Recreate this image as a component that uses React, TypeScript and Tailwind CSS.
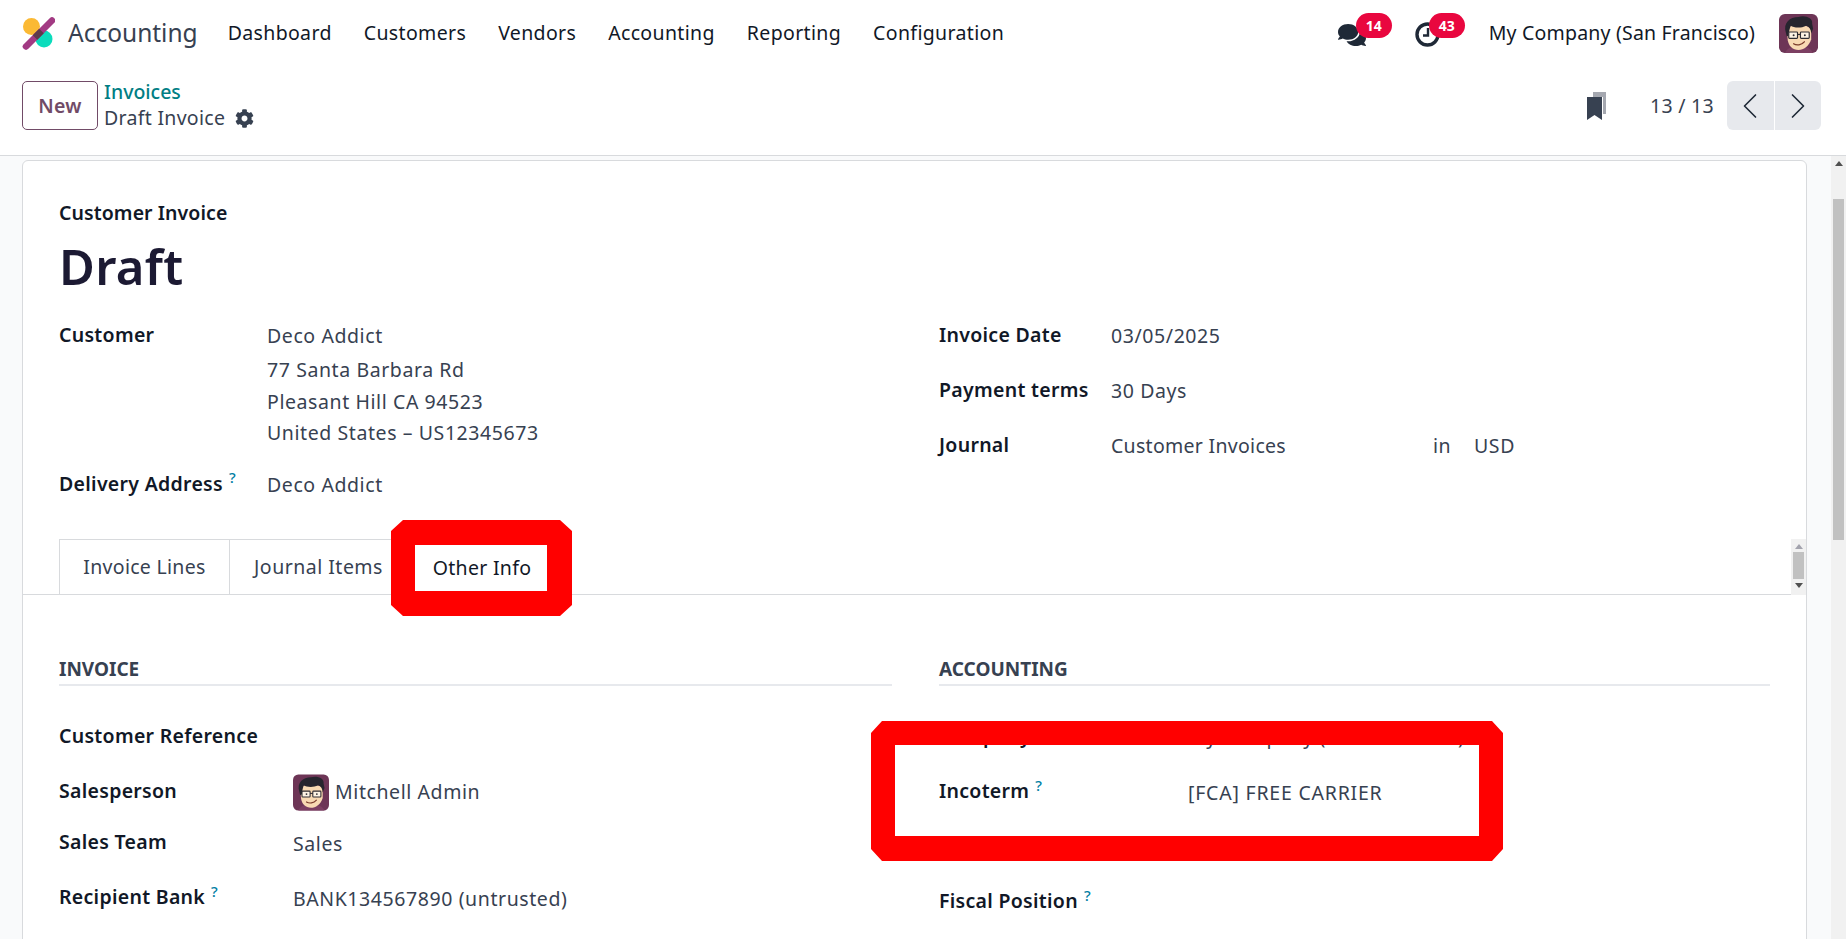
import type { ReactNode } from "react";
import { FaCog, FaComments } from "react-icons/fa";
import { ChevronLeft, ChevronRight } from "lucide-react";

const navItems = ["Dashboard", "Customers", "Vendors", "Accounting", "Reporting", "Configuration"];

function Logo() {
  return (
    <svg width="34" height="34" viewBox="0 0 34 34" className="shrink-0">
      <circle cx="10.5" cy="10.5" r="8.5" fill="#fbb934" />
      <circle cx="23" cy="23" r="8.5" fill="#0bdcbc" />
      <path d="M31 4.5 L5 30.5" stroke="#a23a83" strokeWidth="6.5" strokeLinecap="round" />
      <path d="M20.5 15 L14 21.5" stroke="#5e3a4c" strokeWidth="6.5" />
    </svg>
  );
}

function Avatar({ className }: { className: string }) {
  return (
    <svg viewBox="0 0 40 40" className={className}>
      <rect width="40" height="40" rx="6" fill="#6d3556" />
      <path d="M6 40 C8 35 13 33 20 33 C27 33 33 35 35 40 Z" fill="#7c3f62" />
      <path d="M8 16 C8 10 32 10 33 16 L33 26 C31 33 25 37 20 37 C14 37 10 33 9 27 Z" fill="#f8d9b3" />
      <path d="M7 19 C4 9 11 3 20 3 C27 1 35 4 34 10 L35 15 L33 20 C33 16 31 13 28 12 C22 15 15 14 12 12 C11 15 10 18 10 22 L8 23 Z" fill="#26252e" />
      <rect x="10" y="18.5" width="9" height="6.5" rx="0.8" fill="#fdf3e4" stroke="#2f2d33" strokeWidth="1.2" />
      <rect x="22" y="18.5" width="9" height="6.5" rx="0.8" fill="#fdf3e4" stroke="#2f2d33" strokeWidth="1.2" />
      <path d="M19 21 L22 21" stroke="#2f2d33" strokeWidth="1.2" />
      <circle cx="15" cy="21.8" r="1" fill="#2f2d33" />
      <circle cx="26.5" cy="21.8" r="1" fill="#2f2d33" />
      <path d="M15 30.5 C18 32.5 23 32 26 28.5" stroke="#7a3b2a" strokeWidth="1.3" fill="none" strokeLinecap="round" />
    </svg>
  );
}

function Badge({ left, children }: { left: string; children: ReactNode }) {
  return (
    <span className={`absolute top-[-6px] flex h-[25px] w-[36px] items-center justify-center rounded-full bg-[#e9073f] text-[14px] font-bold tracking-normal text-white ${left}`}>
      {children}
    </span>
  );
}

function Help() {
  return <sup className="ml-[6px] text-[15px] font-medium text-[#0180a5]">?</sup>;
}

function Row({
  label,
  help,
  labelWidth,
  className,
  children,
}: {
  label: string;
  help?: boolean;
  labelWidth: string;
  className?: string;
  children?: ReactNode;
}) {
  return (
    <div className={`flex h-[26px] items-center ${className ?? ""}`}>
      <div className={`shrink-0 font-semibold text-[#111827] ${labelWidth}`}>
        {label}
        {help && <Help />}
      </div>
      <div className="translate-y-[1px] whitespace-nowrap tracking-[0.03em]">{children}</div>
    </div>
  );
}

function SectionTitle({ children }: { children: ReactNode }) {
  return (
    <h3 className="mt-[60px] h-[31px] border-b-2 border-[#e7e9ed] text-[19px] leading-[28px] font-bold tracking-normal text-[#374151]">
      {children}
    </h3>
  );
}

export default function App() {
  return (
    <div className="relative flex h-[939px] flex-col overflow-hidden bg-white font-['Noto_Sans',sans-serif] text-[19.5px] tracking-[0.015em] text-[#374151]">
      {/* top nav */}
      <header className="flex h-[62px] shrink-0 items-center pl-[21px] pr-[28px] pt-[4px] text-[#111827]">
        <Logo />
        <span className="ml-[13px] text-[24.5px] tracking-normal text-[#374151]">Accounting</span>
        <nav className="ml-[30px] flex gap-[32px] tracking-[0.018em]">
          {navItems.map((item) => (
            <span key={item}>{item}</span>
          ))}
        </nav>
        <div className="ml-auto flex items-center">
          <div className="relative h-[28px] w-[54px]">
            <FaComments size={28} className="absolute left-0 top-[2px] text-[#1f2937]" />
            <Badge left="left-[18px]">14</Badge>
          </div>
          <div className="relative ml-[23px] h-[28px] w-[54px]">
            <svg width="25" height="25" viewBox="0 0 25 25" className="absolute left-0 top-[3px]">
              <circle cx="12.5" cy="12.5" r="10.5" fill="none" stroke="#1f2937" strokeWidth="3.4" />
              <path d="M13 6 V13.5 H8" fill="none" stroke="#1f2937" strokeWidth="2.4" />
            </svg>
            <Badge left="left-[14px]">43</Badge>
          </div>
          <span className="ml-[20px] tracking-[0.01em]">My Company (San Francisco)</span>
          <Avatar className="ml-[24px] h-[39px] w-[39px]" />
        </div>
      </header>

      {/* control panel */}
      <div className="flex h-[94px] shrink-0 items-start border-b border-[#d8dadd] pl-[22px] pr-[25px] pt-[19px]">
        <button className="h-[49px] w-[76px] rounded-[5px] border border-[#714b67] text-[19.5px] font-semibold text-[#714b67]">
          New
        </button>
        <div className="ml-[6px] -mt-[1px]">
          <div className="h-[25px] text-[#017e84] font-medium leading-[24px] tracking-normal">Invoices</div>
          <div className="flex items-center gap-[10px] leading-[26px]">
            Draft Invoice
            <FaCog size={19} className="text-[#374151]" />
          </div>
        </div>
        <div className="ml-auto flex items-center">
          <svg width="22" height="30" viewBox="0 0 22 30" className="mr-[2px]">
            <path d="M7 1 H20 V23 H17 V6 H7 Z" fill="#a5a8b0" />
            <path d="M1 6 H16 V29 L8.5 24 L1 29 Z" fill="#374151" />
          </svg>
          <span className="ml-[40px]">13 / 13</span>
          <div className="ml-[13px] flex h-[49px] w-[94px] gap-[1px] overflow-hidden rounded-[6px]">
            <div className="flex flex-1 items-center justify-center bg-[#e7e9ed]">
              <ChevronLeft size={44} strokeWidth={0.9} className="text-[#1f2937]" />
            </div>
            <div className="flex flex-1 items-center justify-center bg-[#e7e9ed]">
              <ChevronRight size={44} strokeWidth={0.9} className="text-[#1f2937]" />
            </div>
          </div>
        </div>
      </div>

      {/* content */}
      <div className="flex min-h-0 flex-1 bg-[#f9fafb]">
        <div className="min-w-0 flex-1 overflow-hidden pl-[22px] pr-[24px] pt-[4px]">
          <div className="h-[900px] rounded-t-[6px] border border-[#d8dadd] bg-white">
            <div className="px-[36px] pt-[40px]">
              <div className="h-[24px] font-semibold leading-[24px] tracking-[0.004em] text-[#111827]">Customer Invoice</div>
              <h1 className="mt-[11px] h-[60px] text-[49px] font-semibold leading-[60px] text-[#1c1a33]">Draft</h1>

              <div className="mt-[26px] grid h-[177px] grid-cols-[833px_1fr] gap-x-[47px]">
                <div>
                  <Row label="Customer" labelWidth="w-[208px]">Deco Addict</Row>
                  <div className="ml-[208px] mt-[6px] leading-[31.5px] tracking-[0.03em]">
                    <div>77 Santa Barbara Rd</div>
                    <div>Pleasant Hill CA 94523</div>
                    <div>United States – US12345673</div>
                  </div>
                  <Row label="Delivery Address" help labelWidth="w-[208px]" className="mt-[22px]">Deco Addict</Row>
                </div>
                <div>
                  <Row label="Invoice Date" labelWidth="w-[172px]">03/05/2025</Row>
                  <Row label="Payment terms" labelWidth="w-[172px]" className="mt-[29px]">30 Days</Row>
                  <Row label="Journal" labelWidth="w-[172px]" className="mt-[29px]">
                    <div className="flex">
                      <span className="w-[322px] tracking-[0.015em]">Customer Invoices</span>
                      <span className="w-[41px]">in</span>
                      <span>USD</span>
                    </div>
                  </Row>
                </div>
              </div>
            </div>

            {/* tabs */}
            <div className="mt-[40px] flex h-[56px] border-b border-[#d8dadd] pl-[36px]">
              <div className="flex h-[56px] w-[171px] items-center justify-center border border-[#d8dadd]">Invoice Lines</div>
              <div className="flex h-[56px] w-[179px] items-center justify-center border border-l-0 border-[#d8dadd] pr-[1px] tracking-[0.025em]">Journal Items</div>
              <div className="flex h-[56px] w-[147px] items-center justify-center border border-b-0 border-l-0 border-[#d8dadd] bg-white text-[#111827]">Other Info</div>
              <div className="ml-auto flex h-[56px] w-[15px] flex-col items-center bg-[#f1f1f1] pt-[5px]">
                <span className="h-0 w-0 border-x-[4px] border-b-[5px] border-x-transparent border-b-[#a3a3ad]" />
                <span className="mt-[3px] h-[27px] w-[11px] bg-[#c1c1c1]" />
                <span className="mt-[4px] h-0 w-0 border-x-[4px] border-t-[5px] border-x-transparent border-t-[#505050]" />
              </div>
            </div>

            <div className="grid grid-cols-[833px_1fr] gap-x-[47px] px-[36px]">
              <div>
                <SectionTitle>INVOICE</SectionTitle>
                <Row label="Customer Reference" labelWidth="w-[234px]" className="mt-[37px]" />
                <Row label="Salesperson" labelWidth="w-[234px]" className="mt-[29px]">
                  <div className="flex items-center gap-[6px]">
                    <Avatar className="h-[37px] w-[36px]" />
                    Mitchell Admin
                  </div>
                </Row>
                <Row label="Sales Team" labelWidth="w-[234px]" className="mt-[25px]">
                  <span className="relative top-[1px]">Sales</span>
                </Row>
                <Row label="Recipient Bank" help labelWidth="w-[234px]" className="mt-[29px]">
                  <span className="relative top-[1px]">BANK134567890 (untrusted)</span>
                </Row>
              </div>
              <div>
                <SectionTitle>ACCOUNTING</SectionTitle>
                <Row label="Company" labelWidth="w-[249px]" className="mt-[37px]">My Company (San Francisco)</Row>
                <Row label="Incoterm" help labelWidth="w-[249px]" className="mt-[29px]">
                  <span className="relative top-[1px] tracking-[0.04em]">[FCA] FREE CARRIER</span>
                </Row>
                <Row label="Fiscal Position" help labelWidth="w-[249px]" className="mt-[84px]" />
              </div>
            </div>
          </div>
        </div>

        {/* page scrollbar */}
        <div className="flex w-[15px] shrink-0 flex-col items-center bg-[#f1f1f1] pt-[5px]">
          <span className="h-0 w-0 border-x-[4px] border-b-[5px] border-x-transparent border-b-[#505050]" />
          <span className="mt-[33px] h-[341px] w-[11px] bg-[#c1c1c1]" />
        </div>
      </div>

      {/* red highlight marks drawn over the screenshot */}
      <svg width="181" height="96" viewBox="0 0 181 96" className="absolute left-[391px] top-[520px]">
        <path
          fillRule="evenodd"
          fill="#ff0000"
          d="M12 0 H169 L181 11 V85 L169 96 H12 L0 85 V11 Z M24 25 V71 H156 V25 Z"
        />
      </svg>
      <svg width="632" height="140" viewBox="0 0 632 140" className="absolute left-[871px] top-[721px]">
        <path
          fillRule="evenodd"
          fill="#ff0000"
          d="M11 0 H621 L632 12 V128 L621 140 H11 L0 128 V12 Z M24 24 V115 H608 V24 Z"
        />
      </svg>
    </div>
  );
}
